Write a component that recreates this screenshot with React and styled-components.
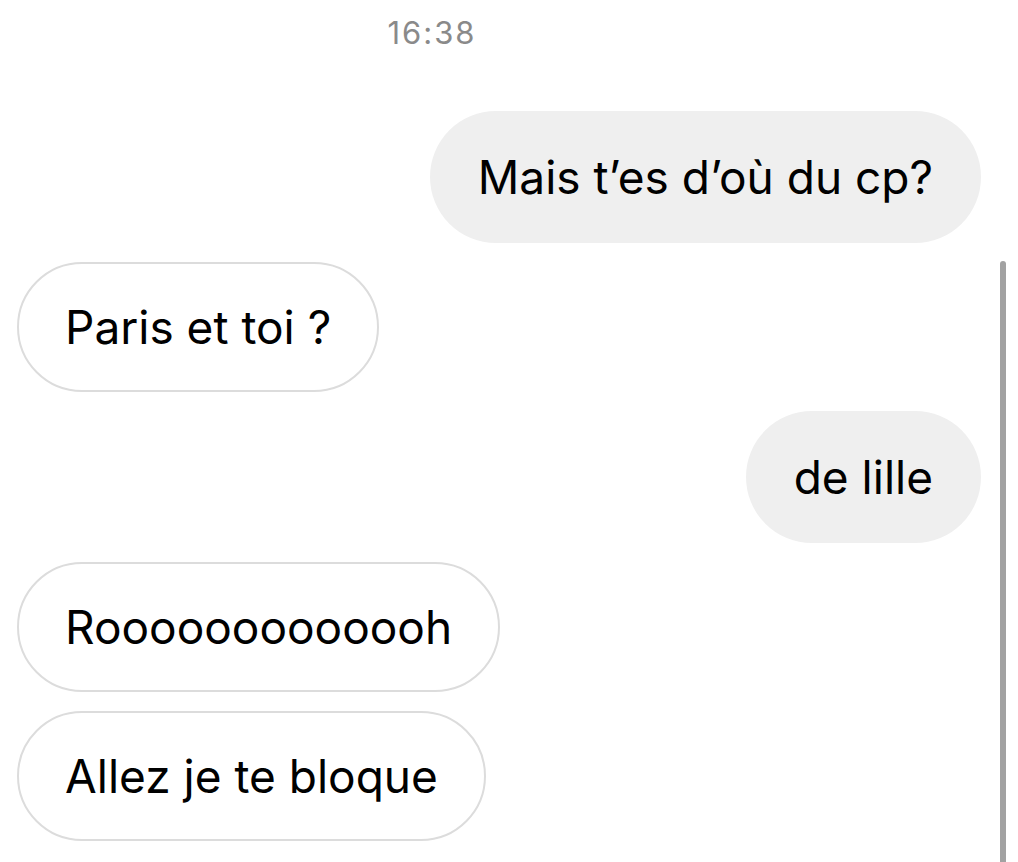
import styled, { createGlobalStyle } from "styled-components";

const messages = [
  { id: 1, fromMe: true, text: "Mais t\u2019es d\u2019où du cp?" },
  { id: 2, fromMe: false, text: "Paris et toi ?" },
  { id: 3, fromMe: true, text: "de lille" },
  { id: 4, fromMe: false, text: "Rooooooooooooh" },
  { id: 5, fromMe: false, text: "Allez je te bloque" },
];

const App = () => {
  return (
    <>
      <GlobalStyle />
      <Screen>
        <Timestamp>16:38</Timestamp>
        <Thread>
          {messages.map((message) => (
            <Row key={message.id} $fromMe={message.fromMe}>
              <Bubble $fromMe={message.fromMe}>{message.text}</Bubble>
            </Row>
          ))}
        </Thread>
        <ScrollIndicator />
      </Screen>
    </>
  );
};

const GlobalStyle = createGlobalStyle`
  body {
    margin: 0;
    background: #ffffff;
    font-family: Inter, "Liberation Sans", Arial, sans-serif;
    -webkit-font-smoothing: antialiased;
  }
`;

const Screen = styled.div`
  position: relative;
  width: 1018px;
  height: 862px;
  overflow: hidden;
  background: #ffffff;
`;

const Timestamp = styled.div`
  width: 864px;
  padding-top: 15px;
  text-align: center;
  font-size: 31px;
  line-height: 36px;
  color: #8a8a8a;
  letter-spacing: 2px;
`;

const Thread = styled.div`
  display: flex;
  flex-direction: column;
  gap: 19px;
  padding: 60px 37px 0 17px;
`;

const Row = styled.div`
  display: flex;
  justify-content: ${(p) => (p.$fromMe ? "flex-end" : "flex-start")};
`;

const Bubble = styled.div`
  box-sizing: border-box;
  height: ${(p) => (p.$fromMe ? "132px" : "130px")};
  display: flex;
  align-items: center;
  padding: 0 ${(p) => (p.$fromMe ? "48px" : "46px")};
  border-radius: 66px;
  background: ${(p) => (p.$fromMe ? "#efefef" : "#ffffff")};
  border: ${(p) => (p.$fromMe ? "none" : "2px solid #dcdcdc")};
  color: #000000;
  font-size: 46px;
  white-space: nowrap;
`;

const ScrollIndicator = styled.div`
  position: absolute;
  left: 1000px;
  top: 261px;
  width: 6px;
  height: 640px;
  border-radius: 3px;
  background: #a2a2a2;
`;

export default App;
